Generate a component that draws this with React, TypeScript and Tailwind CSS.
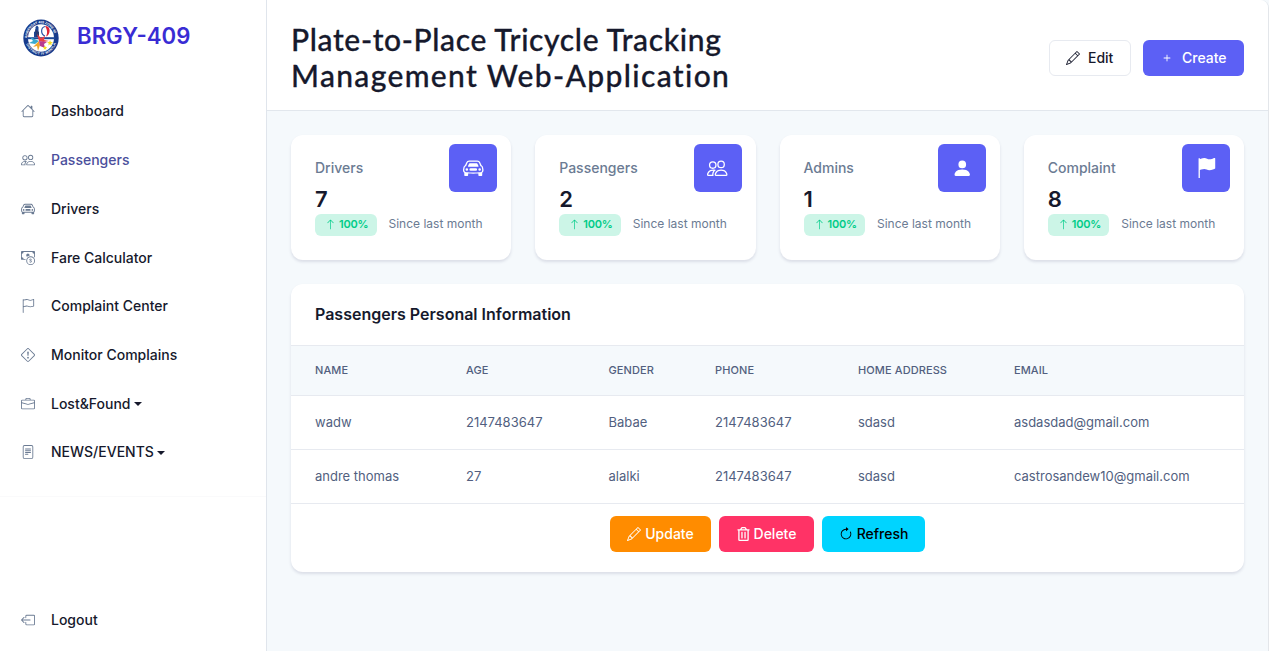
import { BsHouse, BsPeople, BsCarFront, BsCashCoin, BsFlag, BsExclamationDiamond, BsBriefcase, BsFileText, BsBoxArrowLeft, BsPencil, BsPlus, BsPersonFill, BsFlagFill, BsArrowUp, BsArrowClockwise } from 'react-icons/bs';
import { FaRegTrashAlt } from 'react-icons/fa';
import type { IconType } from 'react-icons';

const nav: { label: string; Icon: IconType; active?: boolean; caret?: boolean }[] = [
  { label: 'Dashboard', Icon: BsHouse },
  { label: 'Passengers', Icon: BsPeople, active: true },
  { label: 'Drivers', Icon: BsCarFront },
  { label: 'Fare Calculator', Icon: BsCashCoin },
  { label: 'Complaint Center', Icon: BsFlag },
  { label: 'Monitor Complains', Icon: BsExclamationDiamond },
  { label: 'Lost&Found', Icon: BsBriefcase, caret: true },
  { label: 'NEWS/EVENTS', Icon: BsFileText, caret: true },
];

const stats: { label: string; value: number; Icon: IconType }[] = [
  { label: 'Drivers', value: 7, Icon: BsCarFront },
  { label: 'Passengers', value: 2, Icon: BsPeople },
  { label: 'Admins', value: 1, Icon: BsPersonFill },
  { label: 'Complaint', value: 8, Icon: BsFlagFill },
];

const columns = ['Name', 'Age', 'Gender', 'Phone', 'Home Address', 'Email'];
const rows = [
  ['wadw', '2147483647', 'Babae', '2147483647', 'sdasd', 'asdasdad@gmail.com'],
  ['andre thomas', '27', 'alalki', '2147483647', 'sdasd', 'castrosandew10@gmail.com'],
];

function Seal() {
  return (
    <svg viewBox="0 0 36 38" className="h-[38px] w-9">
      <defs>
        <path id="ringTop" d="M4.2 19a13.8 14.8 0 0 1 27.6 0" />
        <path id="ringBottom" d="M2.3 19a15.7 16.7 0 0 0 31.4 0" />
      </defs>
      <ellipse cx="18" cy="19" rx="17.7" ry="18.5" fill="#173b8c" />
      <ellipse cx="18" cy="19" rx="13" ry="13.8" fill="#fff" />
      <text fontSize="3.4" fontWeight="700" fill="#fff" fontFamily="Liberation Sans">
        <textPath href="#ringTop" textLength="40">BARANGAY 409 ZONE 42</textPath>
      </text>
      <text fontSize="3.4" fontWeight="700" fill="#fff" fontFamily="Liberation Sans">
        <textPath href="#ringBottom" startOffset="6" textLength="39">DISTRICT IV MANILA</textPath>
      </text>
      <path d="M4 18.200h28v2H4z" fill="#1c4796" />
      <path d="M11 18v-5l1.500-1V8l1.500-1.500 1.500 1.500v10z" fill="#1c4796" />
      <path d="M12 10l4 3v5h-3z" fill="#283a70" />
      <path d="M22 7.500c-4.500 1-4.500 8 0 9.500" stroke="#2855a7" strokeWidth="1.200" fill="none" />
      <path d="M22 7c6-1 6 9 1 10.500 2-4 1-7-1-10.500z" fill="#dc2637" />
      <path d="M16 22l-2-7 4 4 4-2-1 4 5 1-6 1z" fill="#e83f45" />
      <path d="M16 22l-9-4 3 4-4 2 6 1z" fill="#39a9cf" />
      <path d="M16 22l-6 6 4-1 1 5 2-6z" fill="#f1a62a" />
      <path d="M16 22l1 5 5 2-1-4 3-2z" fill="#b83a91" />
      <path d="M27 21l.8 2 2.200.2-1.800 1.300.6 2-1.800-1.200-1.800 1.200.6-2-1.800-1.300 2.200-.2zM22 26.500l.6 1.500 1.600.2-1.200 1 .3 1.600-1.300-.8-1.400.8.4-1.600-1.200-1 1.600-.2z" fill="#f5df21" />
    </svg>
  );
}

function Caret() {
  return <span className="ml-[3px] mt-px border-x-4 border-t-4 border-x-transparent border-t-[#16192c]" />;
}

export default function App() {
  return (
    <div className="flex h-[651px] w-[1270px] overflow-hidden bg-[#f5f9fc] font-['Inter',sans-serif] text-[#16192c]">
      <aside className="flex w-[267px] shrink-0 flex-col border-r border-[#e0e5ec] bg-white">
        <div className="flex h-[87px] items-start pl-[23px] pt-[19px]">
          <Seal />
          <span className="ml-[18px] text-[22.200px] font-semibold leading-[33px] text-[#392cd4]">BRGY-409</span>
        </div>
        <nav className="flex h-[410px] flex-col border-b border-[#fafafb]">
          {nav.map(({ label, Icon, active, caret }) => (
            <a key={label} className={`flex h-[48.730px] shrink-0 items-center pl-[21px] text-sm font-medium ${active ? 'text-[#4b4f9c]' : ''}`}>
              <Icon className="mr-4 size-3.5 text-[#6b7b93]" />
              <span>{label}</span>
              {caret && <Caret />}
            </a>
          ))}
        </nav>
        <a className="mt-auto flex h-[62px] items-center pl-[21px] text-sm font-medium">
          <BsBoxArrowLeft className="mr-4 size-3.5 text-[#6b7b93]" />
          Logout
        </a>
      </aside>

      <main className="flex w-[1002px] shrink-0 flex-col rounded-tr-lg border-r border-[#e3e6ea]">
        <header className="flex h-[111px] shrink-0 items-start justify-between rounded-tr-lg border-b border-[#e2e7ed] bg-white pl-6 pr-6">
          <h1 className="whitespace-nowrap pt-[21px] font-['Lato',sans-serif] text-[30px] font-medium leading-9 [-webkit-text-stroke:0.3px_#16192c]">
            <span className="block tracking-[0.640px]">Plate-to-Place Tricycle Tracking</span>
            <span className="block tracking-[1.350px]">Management Web-Application</span>
          </h1>
          <div className="flex gap-3 pt-10 text-sm font-medium">
            <button className="flex h-9 w-[82px] items-center rounded-md border border-[#e7eaf0] bg-white pl-4">
              <BsPencil className="mr-2 size-3.5" />Edit
            </button>
            <button className="flex h-9 w-[101px] items-center rounded-md bg-[#5c60f5] pl-[17px] text-white">
              <BsPlus className="mr-2 size-3.5" />Create
            </button>
          </div>
        </header>

        <div className="flex flex-col gap-6 pl-6 pr-6 pt-6">
          <section className="grid grid-cols-4 gap-6">
            {stats.map(({ label, value, Icon }) => (
              <article key={label} className="flex h-[125px] flex-col rounded-xl bg-white pl-6 pr-3.5 shadow-[0_2px_3px_rgba(50,50,93,0.13)]">
                <div className="flex h-[57px] justify-between pt-[9px]">
                  <span className="pt-3.5 text-sm font-medium leading-5 text-[#6b7b93]">{label}</span>
                  <span className="flex size-12 items-center justify-center rounded-md bg-[#5c60f5] text-white">
                    <Icon className="size-[20.500px]" />
                  </span>
                </div>
                <strong className="-mt-1 h-[26px] text-[22px] font-semibold leading-[22px]">{value}</strong>
                <div className="flex items-center text-xs">
                  <span className="flex h-[22px] w-[61.500px] items-center rounded-md bg-[#ccf5e7] pb-0.5 pl-2.5 text-[11px] font-semibold text-[#00cc88]">
                    <BsArrowUp className="mr-[3px] size-[11px]" />
                    <span className="tracking-[-0.2px]">100%</span>
                  </span>
                  <span className="-mt-[3px] ml-3 text-[#6b7b93]">Since last month</span>
                </div>
              </article>
            ))}
          </section>

          <section className="h-[288px] overflow-hidden rounded-xl bg-white shadow-[0_2px_3px_rgba(50,50,93,0.13)]">
            <h2 className="h-[61px] pl-6 pt-[18px] text-base font-semibold leading-6">Passengers Personal Information</h2>
            <table className="w-full table-fixed border-collapse text-left">
              <colgroup>
                <col className="w-[151px]" /><col className="w-[142.500px]" /><col className="w-[106.500px]" />
                <col className="w-[143px]" /><col className="w-[156px]" /><col />
              </colgroup>
              <thead>
                <tr className="h-[50px] border-y border-[#e7eaf0] bg-[#f5f9fc]">
                  {columns.map((column) => (
                    <th key={column} className="pl-6 text-[11px] font-medium uppercase tracking-[0.1px] text-[#525f7f]">{column}</th>
                  ))}
                </tr>
              </thead>
              <tbody>
                {rows.map((row) => (
                  <tr key={row[0]} className="h-[54px] border-b border-[#e7eaf0] text-[13px] text-[#525f7f]">
                    {row.map((cell, index) => <td key={index} className="pl-6">{cell}</td>)}
                  </tr>
                ))}
              </tbody>
            </table>
            <div className="flex justify-center gap-2 pt-3 text-sm font-medium">
              <button className="flex h-9 w-[101px] items-center justify-center gap-1 rounded-md bg-[#ff8c00] text-white"><BsPencil className="size-3.5" />Update</button>
              <button className="flex h-9 w-[95px] items-center justify-center gap-1 rounded-md bg-[#ff3366] text-white"><FaRegTrashAlt className="h-3.5 w-[13px]" />Delete</button>
              <button className="flex h-9 w-[103px] items-center justify-center gap-1 rounded-md bg-[#00d4ff] text-black"><BsArrowClockwise className="size-3.5" />Refresh</button>
            </div>
          </section>
        </div>
      </main>
      <div className="flex-1 bg-white" />
    </div>
  );
}
